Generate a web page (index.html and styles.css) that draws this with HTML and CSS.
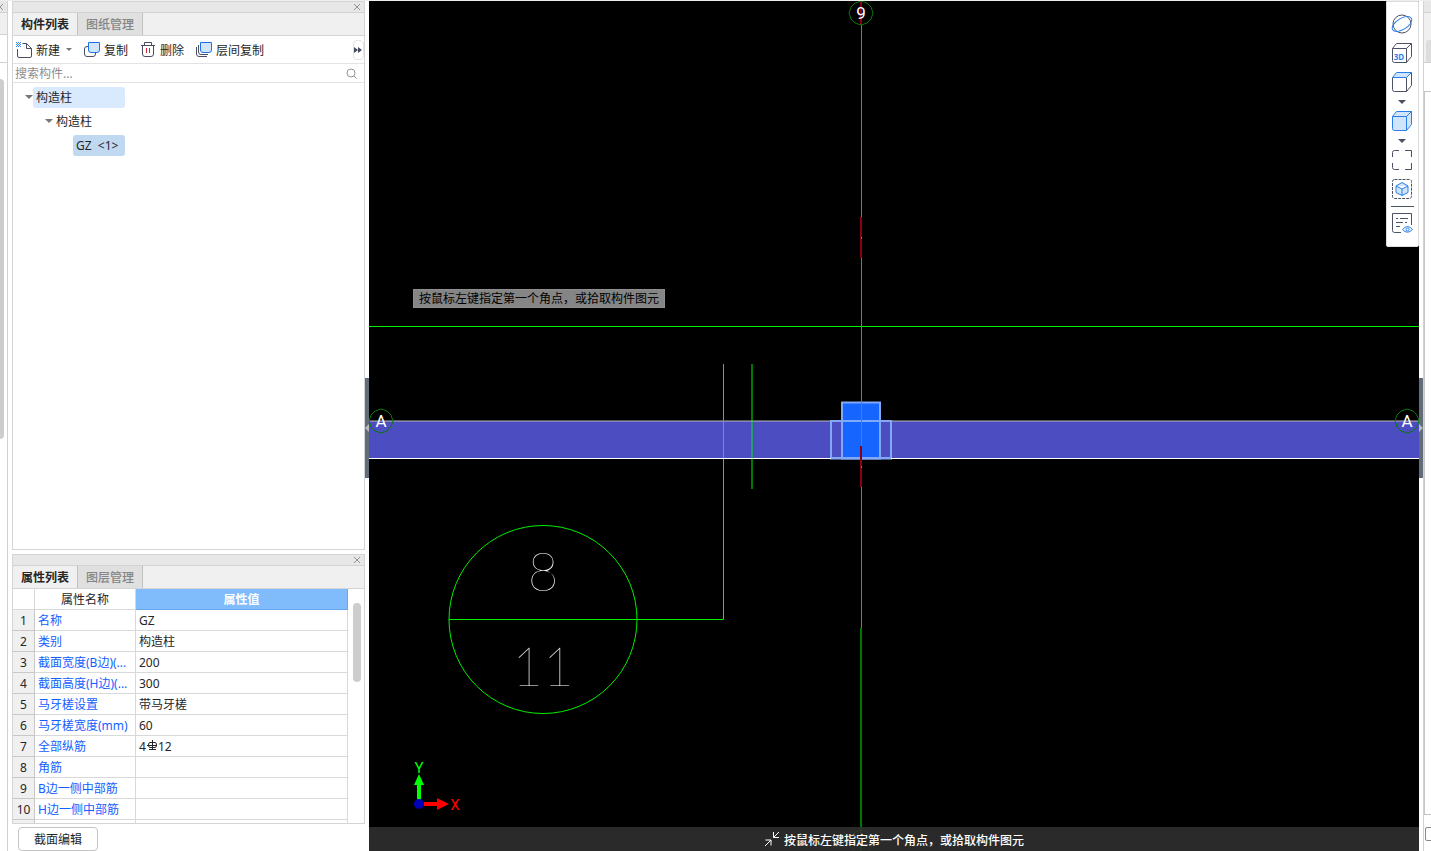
FILE: index.html
```html
<!DOCTYPE html>
<html lang="zh-CN">
<head>
<meta charset="utf-8">
<title>构件列表</title>
<link rel="stylesheet" href="styles.css">
</head>
<body>
<div class="app">
  <aside class="edge edge-left">
    <div class="edge-title"><svg class="cross" viewBox="0 0 8 8"><path d="M1 1l6 6M7 1L1 7"/></svg></div>
    <div class="edge-tabs"></div>
    <div class="edge-tools"></div>
    <div class="edge-scroll"></div>
  </aside>

  <div class="side">
    <section class="panel components">
      <header class="panel-title"><button class="close" aria-label="关闭"><svg class="cross" viewBox="0 0 8 8"><path d="M1 1l6 6M7 1L1 7"/></svg></button></header>
      <nav class="tabs"><button class="tab active">构件列表</button><button class="tab">图纸管理</button></nav>
      <div class="tools">
        <button class="tool"><svg class="icon" viewBox="0 0 16 16"><path class="ink" d="M6.500 1.500H10.500L15.500 6.500V14Q15.500 15.500 14 15.500H3Q1.500 15.500 1.500 14V7M10.500 1.500V6.500H15.500"/><path class="dots" d="M0 0h1v1h-1zM2 0h1v1h-1zM4 0h1v1h-1zM1 1h1v1h-1zM3 1h1v1h-1zM0 2h1v1h-1zM2 2h1v1h-1zM4 2h1v1h-1zM1 3h1v1h-1zM3 3h1v1h-1zM0 4h1v1h-1zM2 4h1v1h-1zM4 4h1v1h-1z"/></svg><span>新建</span><span class="drop"></span></button>
        <button class="tool"><svg class="icon" viewBox="0 0 16 16"><path class="ink" d="M4 4.500H3Q.5 4.500 .5 7V12Q.5 14.500 3 14.500H9Q11.500 14.500 11.500 12V11"/><path class="blue" d="M4.500 .5H15.500V8Q15.500 10.500 13 10.500H7Q4.500 10.500 4.500 8z"/></svg><span>复制</span></button>
        <button class="tool"><svg class="icon" viewBox="0 0 16 16"><path class="ink" d="M1 3.500H15M4.500 3V.5H11.500V3M2.500 3.500V12Q2.500 14.500 5 14.500H11Q13.500 14.500 13.500 12V3.500"/><path class="red" d="M6.500 6v5M9.500 6v5"/></svg><span>删除</span></button>
        <button class="tool"><svg class="icon" viewBox="0 0 16 16"><path class="ink" d="M.5 5V12Q.5 14.500 3 14.500H11M2.500 3V10Q2.500 12.500 5 12.500H12"/><path class="blue" d="M4.500 .5H15.500V8Q15.500 10.500 13 10.500H7Q4.500 10.500 4.500 8z"/></svg><span>层间复制</span></button>
        <button class="more" aria-label="更多"><svg viewBox="0 0 8 6"><path d="M0 0l4 3-4 3zM4 0l4 3-4 3z"/></svg></button>
      </div>
      <label class="search"><input type="text" placeholder="搜索构件..." aria-label="搜索构件"><svg viewBox="0 0 11 11"><circle cx="5" cy="5" r="4"/><path d="M8 8l2.500 2.500"/></svg></label>
      <div class="tree">
        <div class="node"><i class="arrow"></i><span class="label wide">构造柱</span></div>
        <div class="node second"><i class="arrow"></i><span class="label">构造柱</span></div>
        <div class="node third"><span class="label picked">GZ &nbsp;&lt;1&gt;</span></div>
      </div>
    </section>

    <section class="panel properties">
      <header class="panel-title"><button class="close" aria-label="关闭"><svg class="cross" viewBox="0 0 8 8"><path d="M1 1l6 6M7 1L1 7"/></svg></button></header>
      <nav class="tabs"><button class="tab active">属性列表</button><button class="tab">图层管理</button></nav>
      <div class="grid">
        <table>
          <colgroup><col class="c-num"><col class="c-name"><col></colgroup>
          <thead><tr><th></th><th>属性名称</th><th class="value">属性值</th></tr></thead>
          <tbody>
            <tr><th>1</th><td>名称</td><td>GZ</td></tr>
            <tr><th>2</th><td>类别</td><td>构造柱</td></tr>
            <tr><th>3</th><td>截面宽度(B边)(...</td><td>200</td></tr>
            <tr><th>4</th><td>截面高度(H边)(...</td><td>300</td></tr>
            <tr><th>5</th><td>马牙槎设置</td><td>带马牙槎</td></tr>
            <tr><th>6</th><td>马牙槎宽度(mm)</td><td>60</td></tr>
            <tr><th>7</th><td>全部纵筋</td><td>4<svg class="rebar" viewBox="0 0 10 11"><path d="M5.500 0V9M2 9.500H9M0 5.500H10M3 2.500H8Q9.500 2.500 9.500 5T8 7.500H3Q1.500 7.500 1.500 5T3 2.500"/></svg>12</td></tr>
            <tr><th>8</th><td>角筋</td><td></td></tr>
            <tr><th>9</th><td>B边一侧中部筋</td><td></td></tr>
            <tr><th>10</th><td>H边一侧中部筋</td><td></td></tr>
            <tr><th></th><td></td><td></td></tr>
          </tbody>
        </table>
        <div class="track"><div class="thumb"></div></div>
      </div>
    </section>
    <footer class="actions"><button class="edit">截面编辑</button></footer>
  </div>

  <div class="splitter left"><button class="grip" aria-label="收起左侧"><svg viewBox="0 0 4 8"><path d="M4 0v8L0 4z"/></svg></button></div>

  <main class="canvas">
    <svg class="drawing" viewBox="0 0 1050 850" preserveAspectRatio="xMidYMid slice">
      <rect class="beam" x="0" y="420" width="1050" height="37"/>
      <path class="grey" d="M0 420H1050"/>
      <path class="green" d="M0 325.500H1050"/>
      <path class="green" d="M354.500 363V618.500H80"/>
      <path class="green" d="M383 363V488"/>
      <path class="halo" d="M462 420h60v37.500h-60z"/>
      <rect class="column" x="473" y="401.500" width="38" height="56"/>
      <path class="halo" d="M473 420h38"/>
      <path class="white" d="M0 457.500H1050"/>
      <path class="halo" d="M462 457h60"/>
      <path class="axis" d="M492.500 24V216M492.500 257V445M492.500 486V627"/>
      <path class="axis-red" d="M492 0V24M492 216V257M492 445V486"/>
      <path class="axis" d="M492.500 236V238M492.500 465V467"/>
      <path class="green" d="M492 627V850"/>
      <g class="bubble"><path d="M492 0l6 2 4 4 2 6-2 6-4 4-6 2-6-2-4-4-2-6 2-6 4-4z"/><path d="M12 408l6 2 4 4 2 6-2 6-4 4-6 2-6-2-4-4-2-6 2-6 4-4z"/><path d="M1038 408l6 2 4 4 2 6-2 6-4 4-6 2-6-2-4-4-2-6 2-6 4-4z"/><path d="M492 829l6 2 4 4 2 6-2 6-4 4-6 2-6-2-4-4-2-6 2-6 4-4z"/></g>
      <g class="mark"><text x="492" y="18">9</text><text x="12" y="426">A</text><text x="1038" y="426">A</text></g>
      <circle class="green" cx="174" cy="618.500" r="94"/>
      <g class="digits"><text x="174" y="590">8</text><text x="174" y="685">11</text></g>
      <g><path class="y-axis" d="M48 802V784H45L50 773 55 784H52V802z"/><path class="x-axis" d="M55 801H68V797L80 803 68 809V805H55z"/><circle class="origin" cx="50" cy="803" r="5"/><text class="y-name" x="50" y="772">Y</text><text class="x-name" x="86" y="809">X</text></g>
    </svg>
    <div class="tip">按鼠标左键指定第一个角点，或拾取构件图元</div>
    <div class="status"><svg viewBox="0 0 16 16"><path d="M1 15L7 9M1.500 9H7V14.500M15 1L9.500 6.500M9.500 1V6.500H15"/></svg><span>按鼠标左键指定第一个角点，或拾取构件图元</span></div>
    <div class="views">
      <button aria-label="旋转"><svg viewBox="0 0 22 22"><circle class="line" cx="11" cy="11" r="9"/><ellipse class="hot" cx="11" cy="11" rx="11" ry="5.500" transform="rotate(-32 11 11)"/></svg></button>
      <button aria-label="三维"><svg viewBox="0 0 22 22"><path class="line" d="M1.500 6.500H15.500V20.500H3.500Q1.500 20.500 1.500 18.500V6.500L5.500 1.500H20.500V14.500L15.500 20.500M15.500 6.500L20.500 1.500"/><text class="three" x="8" y="18">3D</text></svg></button>
      <button aria-label="俯视"><svg viewBox="0 0 22 22"><path class="line" d="M1.500 6.500V18.500Q1.500 20.500 3.500 20.500H15.500V6.500M15.500 20.500L20.500 14.500V1.500"/><path class="fill hot" d="M1.500 6.500L5.500 1.500H20.500L15.500 6.500z"/></svg></button>
      <i class="drop"></i>
      <button aria-label="着色"><svg viewBox="0 0 22 22"><path class="fill hot" d="M1.500 6.500L5.500 1.500H20.500V14.500L15.500 20.500H3.500Q1.500 20.500 1.500 18.500zM1.500 6.500H15.500V20.500M15.500 6.500L20.500 1.500"/></svg></button>
      <i class="drop"></i>
      <button aria-label="全屏"><svg viewBox="0 0 22 22"><path class="line" d="M1.500 8V3.500Q1.500 1.500 3.500 1.500H8M14 1.500H20.500V8M20.500 14V20.500H14M8 20.500H3.500Q1.500 20.500 1.500 18.500V14"/></svg></button>
      <button aria-label="局部三维"><svg viewBox="0 0 22 22"><rect class="line dash" x="1.500" y="1.500" width="19" height="19" rx="2"/><path class="fill hot" d="M11 4.500L17 8V14.500L11 17.500 5 14.500V8zM5 8L11 11 17 8M11 11V17.500"/></svg></button>
      <hr>
      <button aria-label="显示设置"><svg viewBox="0 0 22 22"><path class="line" d="M10 20.500H3.500Q1.500 20.500 1.500 18.500V1.500H20.500V13M5 6.500H7M9 6.500H17M5 10.500H12M14 10.500H16M5 14.500H9"/><path class="hot" d="M11.500 17.500Q16.500 11.500 21.500 17.500 16.500 23 11.500 17.500z"/><circle class="hot" cx="16.500" cy="17.500" r="1.500"/></svg></button>
    </div>
  </main>

  <div class="splitter right"><button class="grip" aria-label="收起右侧"><svg viewBox="0 0 4 8"><path d="M0 0v8l4-4z"/></svg></button></div>
  <aside class="edge edge-right">
    <div class="edge-title"></div>
    <div class="edge-tabs"><span></span></div>
    <div class="edge-body"></div>
    <div class="edge-list"></div>
    <button class="edge-button" aria-label="选项"></button>
  </aside>
</div>
</body>
</html>
```
FILE: styles.css
```css
* { box-sizing: border-box; }
body { margin: 0; font: 12px/20px "Noto Sans", "Noto Sans CJK SC", sans-serif; color: #262626; background: #fff; overflow: hidden; }
button { font: inherit; color: inherit; border: 0; background: none; padding: 0; margin: 0; }
svg { display: block; fill: none; flex: none; }
.app { display: flex; height: 100vh; border-top: 1px solid #eee; }
.cross { width: 8px; height: 8px; stroke: #929292; }

.edge { display: flex; flex-direction: column; flex: none; overflow: hidden; }
.edge-left { width: 8px; margin-right: 4px; border-right: 1px solid #d2d2d2; }
.edge-title { height: 12px; flex: none; background: #e7e7e7; border-bottom: 1px solid #d2d2d2; }
.edge-left .cross { margin: 2px 0 0 -4px; }
.edge-tabs { height: 22px; flex: none; background: #f0f0f0; border-bottom: 1px solid #d2d2d2; }
.edge-tools { height: 28px; flex: none; border-bottom: 1px solid #d2d2d2; }
.edge-scroll { height: 360px; margin-top: 16px; width: 4px; background: #cdcdcd; border-radius: 0 4px 4px 0; }

.side { width: 353px; flex: none; display: flex; flex-direction: column; }
.panel { border: 1px solid #d5d5d5; display: flex; flex-direction: column; min-height: 0; }
.components { flex: 1; }
.properties { height: 270px; margin-top: 4px; flex: none; }
.panel-title { height: 11px; flex: none; background: #e7e7e7; border-bottom: 1px solid #d2d2d2; display: flex; justify-content: flex-end; align-items: center; padding-right: 3px; }
.tabs { height: 23px; flex: none; display: flex; background: #f0f0f0; border-bottom: 1px solid #d5d5d5; }
.tab { width: 65px; padding-top: 2px; border-right: 1px solid #bfc1c5; color: #858585; font-weight: 500; background: #e0e0e0; }
.tab.active { color: #262626; background: #f0f0f0; font-weight: 700; }
.tools { height: 28px; flex: none; display: flex; align-items: center; gap: 12px; padding-left: 3px; border-bottom: 1px solid #e3e3e3; }
.tool { display: flex; align-items: center; gap: 4px; }
.tool span { padding-top: 2px; }
.icon { width: 16px; height: 16px; }
.ink { stroke: #4a4e63; }
.dots { fill: #2f86ed; }
.blue { stroke: #1c71e8; fill: #d3e5fb; }
.red { stroke: #d8232a; }
.drop { border: 3px solid transparent; border-top-color: #777; border-bottom: 0; margin-left: 2px; }
.tool .drop { padding: 0; }
.more { width: 11px; height: 20px; margin-left: auto; border: 1px solid #e3e3e3; border-radius: 4px; }
.more svg { width: 8px; height: 6px; fill: #444a5e; }
.search { height: 19px; flex: none; display: flex; align-items: center; padding: 0 7px 0 2px; border-bottom: 1px solid #e3e3e3; }
.search input { flex: 1; min-width: 0; border: 0; padding: 2px 0 0; outline: 0; font: inherit; height: 18px; background: none; }
.search input::placeholder { color: #8e8e8e; opacity: 1; }
.search svg { width: 11px; height: 11px; stroke: #979797; }
.tree { padding-top: 2px; }
.node { display: flex; align-items: center; height: 24px; padding-left: 12px; }
.second { padding-left: 32px; }
.third { padding-left: 60px; }
.arrow { border: 4px solid transparent; border-top-color: #777; border-bottom: 0; }
.label { padding: 1px 3px 0; height: 21px; border-radius: 3px; }
.wide { width: 92px; background: #d9eaff; }
.picked { width: 52px; background: #c1d8f1; white-space: nowrap; }

.grid { display: flex; flex: 1; min-height: 0; overflow: hidden; }
table { flex: 1; border-collapse: separate; border-spacing: 0; table-layout: fixed; width: 335px; }
.c-num { width: 22px; }
.c-name { width: 101px; }
tr { height: 21px; }
th, td { height: 21px; padding: 2px 3px 0; border-right: 1px solid #d9d9d9; border-bottom: 1px solid #d9d9d9; line-height: 18px; text-align: left; font-weight: 400; white-space: nowrap; overflow: hidden; }
thead th { text-align: center; }
thead .value { background: #80bbfb; color: #fff; font-weight: 700; border-color: #67a7ed; }
tbody th { background: #f0f0f0; text-align: center; padding: 2px 0 0; border-color: #c8c8c8; }
tbody td:nth-child(2) { color: #145eff; }
.rebar { display: inline-block; width: 10px; height: 11px; stroke: #262626; margin: 0 1px; }
.track { width: 16px; padding: 14px 3px 0 5px; flex: none; }
.thumb { height: 79px; border-radius: 4px; background: #cdcdcd; }
.actions { height: 27px; flex: none; padding: 3px 0 0 6px; }
.edit { width: 80px; height: 24px; padding-top: 2px; border: 1px solid #c4c4c4; border-radius: 4px; }

.splitter { width: 4px; padding-top: 4px; flex: none; display: flex; align-items: center; }
.grip { width: 4px; height: 100px; background: #626d79; display: flex; align-items: center; }
.grip svg { width: 4px; height: 8px; fill: #b9bdc2; }

.canvas { position: relative; flex: 1; min-width: 0; background: #000; overflow: hidden; }
.drawing { width: 100%; height: 100%; }
.beam { fill: #4d4dc2; }
.column { fill: #1765ff; stroke: #82a8fa; stroke-width: 2; }
.halo { stroke: #82a8fa; stroke-width: 2; }
.green { stroke: #00f000; }
.grey { stroke: #bbb; }
.white { stroke: #fff; }
.axis { stroke: #777; }
.axis-red { stroke: #90000c; stroke-width: 2; }
.bubble { stroke: #087808; }
.mark { fill: #fff; font: 17px Roboto, sans-serif; text-anchor: middle; }
.digits { fill: #fff; font: 100 53px Lato, Roboto, sans-serif; text-anchor: middle; }
.y-axis, .y-name { fill: #00ff00; }
.x-axis, .x-name { fill: #ff0000; }
.y-name, .x-name { font: 15px Roboto, sans-serif; text-anchor: middle; }
.origin { fill: #0000b8; }
.tip { position: absolute; left: 44px; top: 288px; height: 19px; padding: 0 5px; line-height: 18px; background: #858585; color: #000; border: 1px solid #8f8f8f; }
.status { position: absolute; left: 0; right: 0; bottom: 0; height: 24px; display: flex; align-items: center; justify-content: center; gap: 4px; background: rgba(48, 48, 48, .87); color: #fff; font-weight: 500; line-height: 20px; }
.status span { padding-top: 4px; }
.status svg { width: 16px; height: 16px; stroke: #fff; }
.views { position: absolute; right: 0; top: 0; width: 33px; height: 246px; display: flex; flex-direction: column; align-items: center; padding: 11px 1px 0 0; background: #fff; border: 1px solid #ddd; border-radius: 0 0 2px 2px; }
.views button { height: 22px; margin-bottom: 7px; flex: none; }
.views svg { width: 22px; height: 22px; }
.views .drop { border-width: 4px; border-bottom-width: 0; border-top-color: #4d5164; margin: 0 0 6px; height: 4px; }
.views hr { width: 23px; height: 1px; border: 0; background: #4d5164; margin: -1px 0 5px; flex: none; }
.line { stroke: #4d5164; }
.hot { stroke: #2b7eea; }
.fill { fill: #d0e4fb; }
.dash { stroke-dasharray: 3 1; }
.three { font: 700 8px "Noto Sans", sans-serif; fill: #2b7eea; text-anchor: middle; }

.edge-right { width: 8px; border-left: 1px solid #d2d2d2; }
.edge-right .edge-tabs { height: 50px; display: flex; align-items: flex-end; padding-left: 2px; }
.edge-right .edge-tabs span { width: 8px; height: 22px; background: #ddd; border-radius: 3px 0 0 0; }
.edge-body { height: 29px; flex: none; border-bottom: 1px solid #c4c4c4; }
.edge-list { flex: 1; border-left: 1px solid #c4c8cc; border-bottom: 1px solid #c4c4c4; }
.edge-button { width: 12px; height: 14px; margin: 12px 0 10px 1px; border: 1px solid #888; border-radius: 2px; flex: none; }
```
